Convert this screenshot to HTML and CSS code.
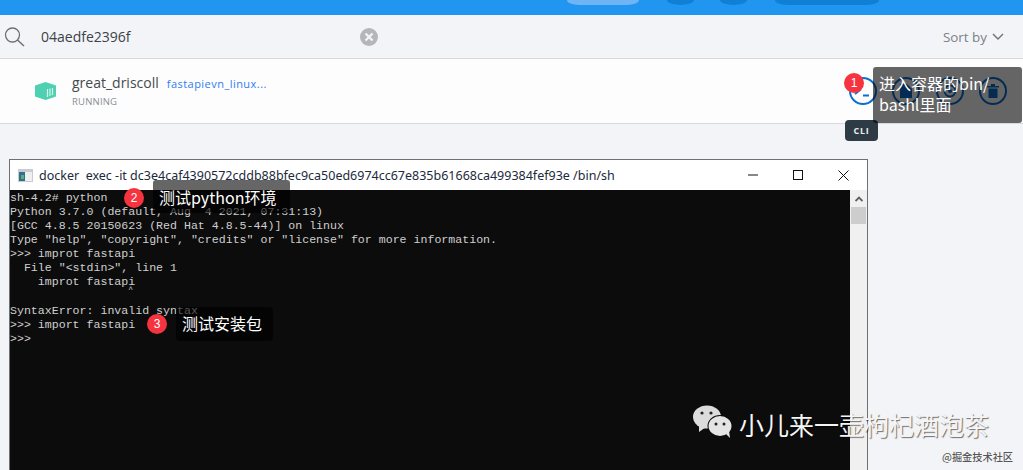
FILE: index.html
```html
<!DOCTYPE html>
<html lang="zh">
<head>
<meta charset="utf-8">
<title>Docker</title>
<link rel="stylesheet" href="styles.css">
</head>
<body>
<header class="topbar">
  <span class="pill"></span>
  <span class="dot dot-a"></span>
  <span class="dot dot-b"></span>
  <span class="wide"></span>
</header>
<section class="search">
  <svg class="mag" width="22" height="22" viewBox="0 0 22 22"><circle cx="9.500" cy="10" r="7" fill="none" stroke="#707070" stroke-width="1.300"/><path d="M14.500 15l6.500 6" stroke="#707070" stroke-width="1.500"/></svg>
  <span class="query">04aedfe2396f</span>
  <svg class="clear" width="18" height="18" viewBox="0 0 18 18"><circle cx="9" cy="9" r="9" fill="#b4b6b8"/><path d="M5.500 5.500l7 7M12.500 5.500l-7 7" stroke="#f3f4f7" stroke-width="2.400"/></svg>
  <span class="sort">Sort by</span>
  <svg class="chev" width="12" height="8" viewBox="0 0 12 8"><path d="M1 1l5 5 5-5" fill="none" stroke="#6a7178" stroke-width="1.400"/></svg>
</section>
<section class="row">
  <svg class="box" width="21" height="18" viewBox="0 0 21 18"><path d="M10.500 0l10.500 3.500v11L10.500 18 0 14.500v-11z" fill="#4fd1b1"/><path d="M12.500 7v8M15 6.500v7.500M17.500 6v7" stroke="#d6f5ec" stroke-width="1.200"/></svg>
  <div class="names">
    <div class="nameline"><span class="name">great_driscoll</span><span class="image">fastapievn_linux...</span></div>
    <div class="state">RUNNING</div>
  </div>
  <div class="actions">
    <span class="circle"><svg width="18" height="14" viewBox="0 0 18 14"><path d="M1 2l5 4-5 4" fill="none" stroke="#0a6fd0" stroke-width="2"/><path d="M9 11.500h6" stroke="#0a6fd0" stroke-width="2"/></svg></span>
    <span class="circle"><svg width="12" height="14" viewBox="0 0 12 14"><path d="M0 0h7l5 5v9H0z" fill="#0a6fd0"/></svg></span>
    <span class="circle"><svg width="16" height="16" viewBox="0 0 16 16"><circle cx="8" cy="8" r="5.500" fill="none" stroke="#0a6fd0" stroke-width="1.800"/><circle cx="8" cy="8" r="2" fill="#0a6fd0"/></svg></span>
    <span class="circle"><svg width="12" height="14" viewBox="0 0 12 14"><path d="M0 2h12v1.500H0zM4 0h4v2H4zM1.500 4.500h9V14h-9z" fill="#0a6fd0"/></svg></span>
  </div>
</section>
<span class="tip">CLI</span>
<div class="note note-1">进入容器的bin/<br>bashl里面</div>
<span class="badge b1">1</span>

<section class="win">
  <div class="titlebar">
    <svg class="appicon" width="15" height="13" viewBox="0 0 15 13"><rect width="15" height="13" fill="#c9cdd0"/><rect x="1" y="3" width="6" height="9" fill="#2f6f8f"/><rect x="7" y="3" width="7" height="9" fill="#eef0f0"/><rect x="3" y="6" width="3" height="4" fill="#5fae6d"/></svg>
    <span class="wtitle">docker&nbsp; exec -it dc3e4caf4390572cddb88bfec9ca50ed6974cc67e835b61668ca499384fef93e /bin/sh</span>
    <div class="wctl">
      <svg width="10" height="10" viewBox="0 0 10 10"><path d="M0 5h10" stroke="#111" stroke-width="1"/></svg>
      <svg width="10" height="10" viewBox="0 0 10 10"><rect x=".5" y=".5" width="9" height="9" fill="none" stroke="#111"/></svg>
      <svg width="11" height="11" viewBox="0 0 11 11"><path d="M.5.500l10 10M10.500.500l-10 10" stroke="#111"/></svg>
    </div>
  </div>
  <div class="termwrap">
<pre class="term">sh-4.2# python
Python 3.7.0 (default, Aug  4 2021, 07:31:13)
[GCC 4.8.5 20150623 (Red Hat 4.8.5-44)] on linux
Type "help", "copyright", "credits" or "license" for more information.
&gt;&gt;&gt; improt fastapi
  File "&lt;stdin&gt;", line 1
    improt fastapi
                 <span class="caret">^</span>
SyntaxError: invalid syntax
&gt;&gt;&gt; import fastapi
&gt;&gt;&gt;</pre>
    <div class="scroll">
      <svg class="up" width="8" height="6" viewBox="0 0 8 6"><path d="M.5 5L4 1.500 7.500 5" fill="none" stroke="#606060" stroke-width="1.800"/></svg>
      <span class="thumb"></span>
    </div>
  </div>
</section>

<span class="badge b2">2</span>
<div class="note note-2">测试python环境</div>
<span class="badge b3">3</span>
<div class="note note-3">测试安装包</div>

<svg class="wechat" width="40" height="34" viewBox="0 0 40 34"><ellipse cx="14" cy="12" rx="14" ry="11.500" fill="#dcdcdc"/><path d="M6 20l0 7 7-5z" fill="#dcdcdc"/><ellipse cx="27" cy="21" rx="12.500" ry="11" fill="#0c0c0c"/><ellipse cx="27" cy="21" rx="11.500" ry="10" fill="#e4e4e4"/><path d="M33 29l4 4-1-7z" fill="#e4e4e4"/><circle cx="9" cy="8" r="1.600" fill="#222"/><circle cx="18" cy="8" r="1.600" fill="#222"/><circle cx="23" cy="19" r="1.500" fill="#222"/><circle cx="31" cy="19" r="1.500" fill="#222"/></svg>
<span class="mark">小儿来一壶枸杞酒泡茶</span>
<span class="juejin">@掘金技术社区</span>
</body>
</html>
```

FILE: styles.css
```css
* { box-sizing: border-box; }
html, body { margin: 0; height: 470px; overflow: hidden; }
body { position: relative; background: #f3f4f7; font-family: "Open Sans", "Noto Sans CJK SC", sans-serif; width: 1023px; }

.topbar { height: 15px; background: #2196f0; position: relative; }
.pill { position: absolute; left: 567px; top: 0; width: 72px; height: 5px; background: #6fb4f5; border-radius: 0 0 12px 12px / 0 0 5px 5px; }
.dot { position: absolute; top: 0; width: 27px; height: 5px; background: #0f80d6; border-radius: 0 0 50% 50% / 0 0 100% 100%; }
.dot-a { left: 667px; }
.dot-b { left: 720px; }
.wide { position: absolute; left: 775px; top: 0; width: 104px; height: 5px; background: #0f80d6; border-radius: 0 0 12px 12px / 0 0 5px 5px; }

.search { height: 44px; border-bottom: 1px solid #d8d9dc; display: flex; align-items: center; padding: 0 19px 0 3px; }
.mag { flex: none; margin-top: -1px; }
.query { margin-left: 16px; width: 319px; font-size: 14px; color: #3c4248; }
.clear { flex: none; }
.sort { margin-left: auto; font-family: "Open Sans", sans-serif; font-size: 13.4px; color: #7a8188; }
.chev { margin-left: 5px; }

.row { height: 65px; background: #fdfdfd; border-bottom: 1px solid #d8d9dc; display: flex; align-items: center; padding-left: 35px; }
.box { flex: none; }
.names { margin-left: 16px; padding-bottom: 1px; }
.nameline { display: flex; align-items: baseline; height: 20px; }
.name { font-size: 14px; color: #444a50; }
.image { margin-left: 8px; font-size: 11px; color: #2f7cf0; letter-spacing: .46px; }
.state { font-size: 9.5px; color: #8a8f94; margin-top: 2px; letter-spacing: .2px; }
.actions { margin-left: auto; margin-right: 16px; display: flex; gap: 15.500px; }
.circle { width: 28px; height: 28px; border: 2px solid #0a6fd0; border-radius: 50%; display: flex; align-items: center; justify-content: center; }

.note { position: absolute; color: #fff; background: rgba(0,0,0,.6); font-family: "Noto Sans CJK SC", sans-serif; font-size: 16px; }
.note-1 { left: 873px; top: 67px; width: 149px; height: 56px; border-radius: 3px; padding: 6px 6px; line-height: 21px; }
.note-2 { left: 153px; top: 180px; width: 137px; height: 33px; border-radius: 3px; padding: 7px 6px 0; line-height: 20px; }
.note-3 { left: 176px; top: 307px; width: 97px; height: 34px; border-radius: 4px; padding: 6px 6px 0; line-height: 20px; }

.badge { position: absolute; width: 20px; height: 20px; border-radius: 50%; background: #f5343f; color: #fff; font-size: 12px; text-align: center; line-height: 20px; font-family: "Liberation Sans", sans-serif; }
.b1 { left: 844px; top: 73px; }
.b2 { left: 124px; top: 188px; }
.b3 { left: 147px; top: 314px; }

.tip { position: absolute; left: 845px; top: 120px; width: 33px; height: 21px; background: #2f3b44; color: #e8ebee; border-radius: 4px; font-size: 9px; font-weight: 700; letter-spacing: .7px; text-align: center; line-height: 21px; }

.win { position: absolute; left: 9px; top: 159px; width: 859px; height: 311px; border: 1px solid #6f7072; border-bottom: 0; background: #fff; display: flex; flex-direction: column; }
.titlebar { height: 30px; display: flex; align-items: center; padding-left: 8px; flex: none; }
.appicon { flex: none; }
.wtitle { margin-left: 6px; font-size: 12.5px; color: #1c2a3c; white-space: pre; font-family: "Noto Sans", sans-serif; }
.wctl { margin-left: auto; display: flex; align-items: center; gap: 35px; padding-right: 18px; }
.termwrap { flex: 1; display: flex; min-height: 0; }
.term { flex: 1; margin: 0; background: #0c0c0c; color: #cfcfcf; font-family: "Liberation Mono", monospace; font-size: 11.6px; line-height: 14px; overflow: hidden; padding: 1px 0 0; }
.caret { position: relative; top: -7px; font-size: 8px; }
.scroll { flex: none; width: 17px; background: #f0f0f0; padding: 0 1px; display: flex; flex-direction: column; align-items: center; }
.up { margin-top: 6px; }
.thumb { width: 15px; height: 17px; background: #cdcdcd; margin-top: 5px; }

.wechat { position: absolute; left: 693px; top: 405px; }
.mark { position: absolute; left: 739px; top: 406px; color: #f5f5f5; font-family: "Noto Sans CJK SC", sans-serif; font-size: 25px; line-height: 36px; white-space: nowrap; text-shadow: 1px 1px 1px rgba(0,0,0,.55); }
.juejin { position: absolute; left: 942px; top: 450px; color: #555; font-family: "Noto Sans CJK SC", sans-serif; font-size: 10.2px; line-height: 14px; white-space: nowrap; font-weight: 500; text-shadow: 0 0 1px #fff; }
```
